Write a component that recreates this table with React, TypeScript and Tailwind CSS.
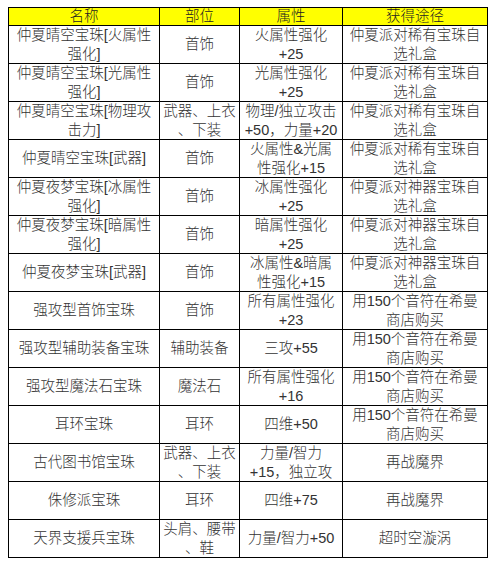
import React from "react";

type Row = string[][];

const rare = ["仲夏派对稀有宝珠自", "选礼盒"];
const art = ["仲夏派对神器宝珠自", "选礼盒"];
const shop = ["用150个音符在希曼", "商店购买"];

const rows: Row[] = [
  [["仲夏晴空宝珠[火属性", "强化]"], ["首饰"], ["火属性强化", "+25"], rare],
  [["仲夏晴空宝珠[光属性", "强化]"], ["首饰"], ["光属性强化", "+25"], rare],
  [["仲夏晴空宝珠[物理攻", "击力]"], ["武器、上衣", "、下装"], ["物理/独立攻击", "+50，力量+20"], rare],
  [["仲夏晴空宝珠[武器]"], ["首饰"], ["火属性&光属", "性强化+15"], rare],
  [["仲夏夜梦宝珠[冰属性", "强化]"], ["首饰"], ["冰属性强化", "+25"], art],
  [["仲夏夜梦宝珠[暗属性", "强化]"], ["首饰"], ["暗属性强化", "+25"], art],
  [["仲夏夜梦宝珠[武器]"], ["首饰"], ["冰属性&暗属", "性强化+15"], art],
  [["强攻型首饰宝珠"], ["首饰"], ["所有属性强化", "+23"], shop],
  [["强攻型辅助装备宝珠"], ["辅助装备"], ["三攻+55"], shop],
  [["强攻型魔法石宝珠"], ["魔法石"], ["所有属性强化", "+16"], shop],
  [["耳环宝珠"], ["耳环"], ["四维+50"], shop],
  [["古代图书馆宝珠"], ["武器、上衣", "、下装"], ["力量/智力", "+15，独立攻"], ["再战魔界"]],
  [["侏修派宝珠"], ["耳环"], ["四维+75"], ["再战魔界"]],
  [["天界支援兵宝珠"], ["头肩、腰带", "、鞋"], ["力量/智力+50"], ["超时空漩涡"]],
];

const headers = ["名称", "部位", "属性", "获得途径"];

export default function App() {
  return (
    <div
      className="w-[493px] h-[567px] bg-white pt-[7px] pl-[8px] text-[#333] font-light"
      style={{ fontFamily: '"Liberation Sans", "Noto Sans CJK SC", sans-serif' }}
    >
      <div className="grid w-[480px] grid-cols-[151px_80px_103px_145px] border-l border-t border-black text-[14.5px]">
        {headers.map((h) => (
          <div
            key={h}
            className="h-[18px] bg-[#ffff00] border-r border-b border-black flex items-center justify-center leading-[17px] text-[#222]"
          >
            {h}
          </div>
        ))}
        {rows.map((r, i) =>
          r.map((cell, j) => (
            <div
              key={i + "-" + j}
              className="h-[38px] border-r border-b border-black flex flex-col items-center justify-center overflow-hidden text-center leading-[18.5px] whitespace-nowrap"
            >
              {cell.map((line, k) => (
                <span key={k} className="block">
                  {line}
                </span>
              ))}
            </div>
          ))
        )}
      </div>
    </div>
  );
}
